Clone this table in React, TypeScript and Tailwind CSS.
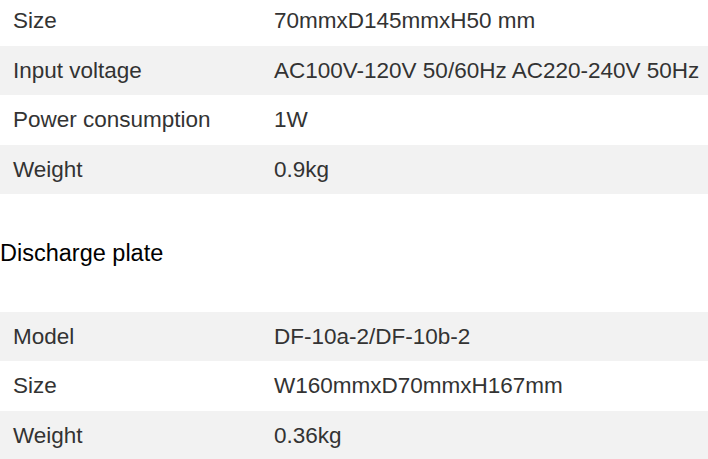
import React from 'react';

type Row = { label: string; value: string; h: string };

const powerRows: Row[] = [
    { label: 'Size', value: '70mmxD145mmxH50 mm', h: 'h-[50px]' },
    { label: 'Input voltage', value: 'AC100V-120V 50/60Hz AC220-240V 50Hz', h: 'h-[49px]' },
    { label: 'Power consumption', value: '1W', h: 'h-[50px]' },
    { label: 'Weight', value: '0.9kg', h: 'h-[49px]' },
];

const plateRows: Row[] = [
    { label: 'Model', value: 'DF-10a-2/DF-10b-2', h: 'h-[49px]' },
    { label: 'Size', value: 'W160mmxD70mmxH167mm', h: 'h-[50px]' },
    { label: 'Weight', value: '0.36kg', h: 'h-[50px]' },
];

const SpecTable: React.FC<{ rows: Row[]; startGray?: boolean }> = ({ rows, startGray = false }) => (
    <div className="flex flex-col w-full">
        {rows.map((r, i) => {
            const gray = startGray ? i % 2 === 0 : i % 2 === 1;
            return (
                <div
                    key={r.label + i}
                    className={`flex items-center ${r.h} ${gray ? 'bg-[#f2f2f2]' : 'bg-white'} text-[#333333] text-[22.5px] whitespace-nowrap`}
                >
                    <div className="w-[274px] pl-[13px] shrink-0">{r.label}</div>
                    <div>{r.value}</div>
                </div>
            );
        })}
    </div>
);

export default function App() {
    return (
        <div className="w-[708px] h-[459px] overflow-hidden bg-white font-['Liberation_Sans',Arial,sans-serif]">
            <div className="-mt-[4px]">
                <SpecTable rows={powerRows} />
            </div>
            <h3 className="mt-[45px] mb-[45px] text-[23.5px] leading-[28px] text-black font-normal">Discharge plate</h3>
            <SpecTable rows={plateRows} startGray />
        </div>
    );
}
